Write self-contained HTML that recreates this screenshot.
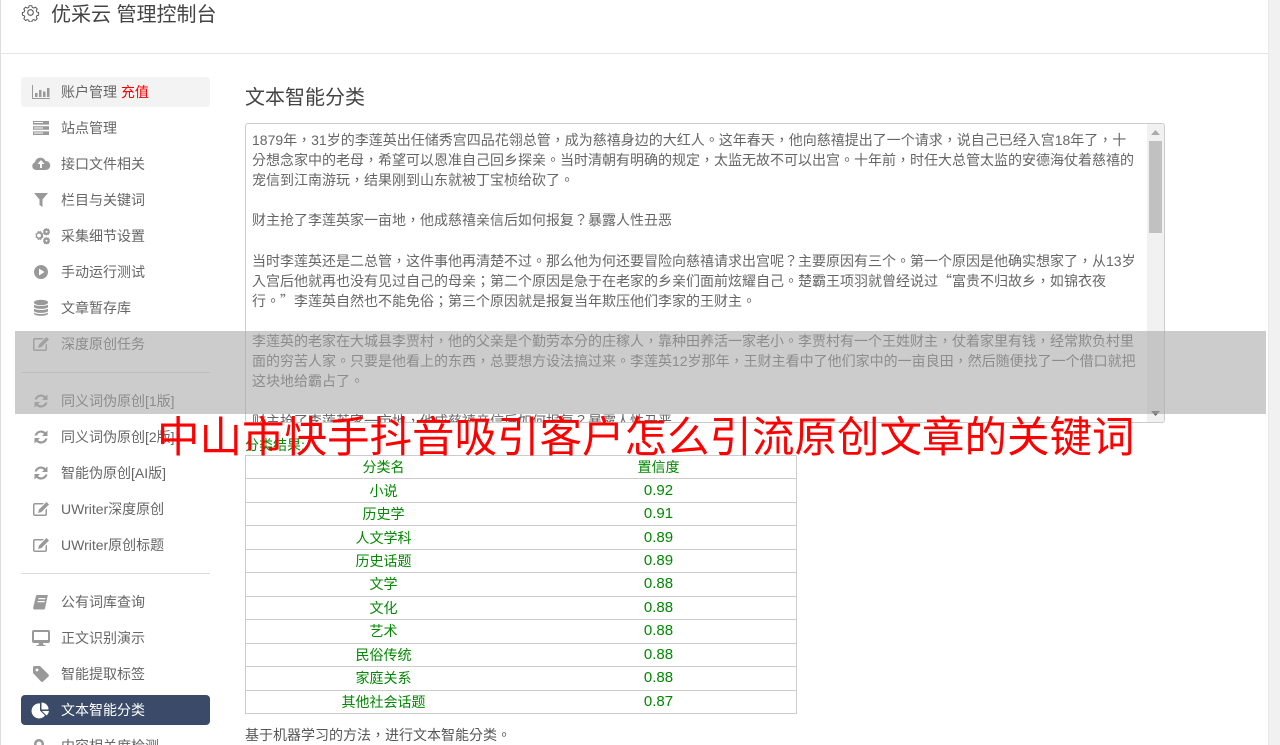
<!DOCTYPE html>
<html lang="zh-Hans"><head><meta charset="utf-8"><title>优采云 管理控制台</title>
<style>
*{box-sizing:border-box}
html,body{margin:0;padding:0;width:1280px;height:745px;overflow:hidden;background:#fff}
body{position:relative;font-family:"Liberation Sans","Noto Sans CJK SC",sans-serif;font-size:14px;color:#666}
.a{position:absolute;white-space:nowrap}
.it{position:absolute;left:21px;width:189px;height:30px;border-radius:4px;line-height:30px;padding-left:40px;color:#666;font-size:14px;white-space:nowrap}
.it svg{position:absolute;left:10px;top:6px;width:20px;height:18px;fill:#999}
.hr{position:absolute;left:21px;width:189px;height:1px;background:#ddd}
#ta{position:absolute;left:245px;top:123px;width:920px;height:300px;border:1px solid #ccc;border-radius:3px;overflow:hidden;background:#fff}
#ta .t{position:absolute;left:6px;top:6px;line-height:20.1px;font-size:14px;color:#666;white-space:nowrap;font-family:"Liberation Sans","Noto Sans CJK TC",sans-serif}
#ta .q{font-family:"Noto Sans CJK TC",sans-serif}
#sb{position:absolute;right:0;top:0;width:17px;height:298px;background:#f1f1f1}
#th{position:absolute;left:2px;top:17px;width:13px;height:92px;background:#c1c1c1}
table{position:absolute;left:245px;top:455px;width:552px;height:259px;border-collapse:collapse;color:#080;table-layout:fixed}
td{border-top:1px solid #ccc;border-bottom:1px solid #ccc;text-align:center;padding:0;font-size:14px;line-height:16px;height:23.4px}
tr td:first-child{border-left:1px solid #ccc}
tr td:last-child{border-right:1px solid #ccc;font-size:15px}
tr:first-child td:last-child{font-size:14px}
</style></head><body>
<div class="a" style="left:0;top:0;width:1px;height:745px;background:#ddd"></div>
<div class="a" style="left:1268px;top:0;width:12px;height:745px;background:#f1f1f1;border-left:1px solid #e9e9e9"></div>
<div class="a" style="left:0;top:53px;width:1268px;height:1px;background:#e5e5e5"></div>

<svg class="a" style="left:21px;top:3px" width="19" height="19" viewBox="0 0 19 19" fill="none" stroke="#555"><circle cx="9.500" cy="9.500" r="2.800" stroke-width="1.100"/><path stroke-width="1.100" d="M8 1.800h3l.5 2 1.700.700 1.800-1.100 2.100 2.100-1.100 1.800.700 1.700 2 .5v3l-2 .5-.700 1.700 1.100 1.800-2.100 2.100-1.800-1.100-1.700.700-.5 2H8l-.5-2-1.700-.700-1.800 1.100-2.100-2.100 1.100-1.800-.700-1.700-2-.5v-3l2-.5.700-1.700-1.100-1.800 2.100-2.100 1.800 1.100 1.700-.700z" transform="translate(1.100 1.100) scale(.885)" stroke-linejoin="round"/></svg>
<div class="a" style="left:51px;top:1px;font-size:20px;line-height:28px;color:#444">优采云 管理控制台</div>

<div class="it" style="top:77px;background:#f3f3f3"><svg viewBox="0 0 20 18"><path d="M1 2h1v13h17v1H1z"/><path d="M4 10h2.500v4H4zM8 7h2.500v7H8zM12 8.500h2.500V14H12zM16 5h2.500v9H16z"/></svg>账户管理 <span style="color:#f00">充值</span></div>
<div class="it" style="top:113px"><svg viewBox="0 0 20 18"><path d="M2 2h16v3.600H2zM2 7.200h16v3.600H2zM2 12.400h16V16H2z"/><path fill="#fff" d="M3 3h9v1H3zM3 8.500h9v1H3zM3 13.500h9v1H3z"/></svg>站点管理</div>
<div class="it" style="top:149px"><svg viewBox="0 0 20 18"><path d="M5 15a4 4 0 0 1-1-7.800A5.500 5.500 0 0 1 14.500 6 4.500 4.500 0 0 1 15 15z"/><path fill="#fff" d="M10 5l3.500 4H11v4H9V9H6.500z"/></svg>接口文件相关</div>
<div class="it" style="top:185px"><svg viewBox="0 0 20 18"><path d="M3 2h14l-5.500 6.500V16l-3-2V8.500z"/></svg>栏目与关键词</div>
<div class="it" style="top:221px"><svg viewBox="0 0 20 18"><path fill-rule="evenodd" d="M7 4l1.500.500 1.500-.500.800 1.800 1.700.900-.6 1.800.6 1.800-1.700.9L10 13l-1.500-.500L7 13l-.800-1.800-1.800-.9.600-1.800-.600-1.800 1.800-.9zM8 6.500a2 2 0 1 0 .01 0z"/><path fill-rule="evenodd" d="M15.500 1l1 .800 1.300-.200.300 1.300 1 .8-.6 1.100.6 1.100-1 .8-.3 1.300-1.300-.2-1 .8-1-.8-1.300.2-.3-1.300-1-.8.600-1.100-.600-1.100 1-.8.300-1.300 1.300.2zm0 2.800a1 1 0 1 0 .01 0zM15.500 10l1 .800 1.300-.200.300 1.300 1 .8-.6 1.100.6 1.100-1 .8-.3 1.300-1.300-.2-1 .8-1-.8-1.300.2-.3-1.300-1-.8.600-1.100-.600-1.100 1-.8.300-1.300 1.300.2zm0 2.800a1 1 0 1 0 .01 0z"/></svg>采集细节设置</div>
<div class="it" style="top:257px"><svg viewBox="0 0 20 18"><path fill-rule="evenodd" d="M10 2a7 7 0 1 1-.01 0zM8 5.500v7l5.500-3.500z"/></svg>手动运行测试</div>
<div class="it" style="top:293px"><svg viewBox="0 0 20 18"><ellipse cx="10" cy="3.500" rx="7" ry="2.800"/><path d="M3 5.500c1 2 13 2 14 0v2.500c-1 2.500-13 2.500-14 0zM3 9.500c1 2 13 2 14 0V12c-1 2.500-13 2.500-14 0zM3 13.500c1 2 13 2 14 0v1.200c-1 2.800-13 2.800-14 0z"/></svg>文章暂存库</div>
<div class="it" style="top:329px"><svg viewBox="0 0 20 18"><path d="M4 3h9l-1.500 1.500H4A.5.500 0 0 0 3.500 5v9c0 .3.200.5.500.5h10a.5.500 0 0 0 .5-.5V10L16 8.500V14a2 2 0 0 1-2 2H4a2 2 0 0 1-2-2V5a2 2 0 0 1 2-2z"/><path d="M15.500 2L18 4.500 10.500 12 7 13l1-3.500z"/></svg>深度原创任务</div>
<div class="hr" style="top:372px"></div>
<div class="it" style="top:386px"><svg viewBox="0 0 20 18"><path d="M10 2.500a6.500 6.500 0 0 1 4.500 1.800L16.500 2.500V8H11l2-2a4.300 4.300 0 0 0-7.200 1.500H3.500A6.600 6.600 0 0 1 10 2.500zM3.500 10H9l-2 2a4.300 4.300 0 0 0 7.200-1.500h2.300a6.600 6.600 0 0 1-11 3.200L3.500 15.500z"/></svg>同义词伪原创[1版]</div>
<div class="it" style="top:422px"><svg viewBox="0 0 20 18"><path d="M10 2.500a6.500 6.500 0 0 1 4.500 1.800L16.500 2.500V8H11l2-2a4.300 4.300 0 0 0-7.200 1.500H3.500A6.600 6.600 0 0 1 10 2.500zM3.500 10H9l-2 2a4.300 4.300 0 0 0 7.200-1.500h2.300a6.600 6.600 0 0 1-11 3.200L3.500 15.500z"/></svg>同义词伪原创[2版]</div>
<div class="it" style="top:458px"><svg viewBox="0 0 20 18"><path d="M10 2.500a6.500 6.500 0 0 1 4.500 1.800L16.500 2.500V8H11l2-2a4.300 4.300 0 0 0-7.200 1.500H3.500A6.600 6.600 0 0 1 10 2.500zM3.500 10H9l-2 2a4.300 4.300 0 0 0 7.200-1.500h2.300a6.600 6.600 0 0 1-11 3.200L3.500 15.500z"/></svg>智能伪原创[AI版]</div>
<div class="it" style="top:494px"><svg viewBox="0 0 20 18"><path d="M4 3h9l-1.500 1.500H4A.5.500 0 0 0 3.500 5v9c0 .3.200.5.500.5h10a.5.500 0 0 0 .5-.5V10L16 8.500V14a2 2 0 0 1-2 2H4a2 2 0 0 1-2-2V5a2 2 0 0 1 2-2z"/><path d="M15.500 2L18 4.500 10.500 12 7 13l1-3.500z"/></svg>UWriter深度原创</div>
<div class="it" style="top:530px"><svg viewBox="0 0 20 18"><path d="M4 3h9l-1.500 1.500H4A.5.500 0 0 0 3.500 5v9c0 .3.200.5.500.5h10a.5.500 0 0 0 .5-.5V10L16 8.500V14a2 2 0 0 1-2 2H4a2 2 0 0 1-2-2V5a2 2 0 0 1 2-2z"/><path d="M15.500 2L18 4.500 10.500 12 7 13l1-3.500z"/></svg>UWriter原创标题</div>
<div class="hr" style="top:573px"></div>
<div class="it" style="top:587px"><svg viewBox="0 0 20 18"><path d="M6 2h11l-.5 1.500L14 15.500c-.3.800-1 1-1.500 1H4c-1.500 0-2-1-1.800-2L5 3c.1-.6.500-1 1-1zM7.500 5l-.3 1.200h7l.3-1.200zM6.800 8l-.3 1.200h7l.3-1.200z"/></svg>公有词库查询</div>
<div class="it" style="top:623px"><svg viewBox="0 0 20 18"><path fill-rule="evenodd" d="M3 1h14a2 2 0 0 1 2 2v9a2 2 0 0 1-2 2h-5l.5 2h2v1h-9v-1h2l.5-2H3a2 2 0 0 1-2-2V3a2 2 0 0 1 2-2zm0 2v8h14V3z"/></svg>正文识别演示</div>
<div class="it" style="top:659px"><svg viewBox="0 0 20 18"><path fill-rule="evenodd" d="M3 1h6l8.500 8.500a1.500 1.500 0 0 1 0 2L12 16.500a1.500 1.500 0 0 1-2 0L2 8V2zm3 2.500a1.500 1.500 0 1 0 .01 0z"/></svg>智能提取标签</div>
<div class="it" style="top:695px;background:#3a4a68;color:#fff"><svg viewBox="0 0 20 18" style="fill:#fff"><path d="M9 2.500v7l5 5A7.500 7.500 0 1 1 9 2.500z"/><path d="M10.500 1.500a7 7 0 0 1 7 7h-7z"/><path d="M11 10h7a7.500 7.500 0 0 1-2.500 4.500z"/></svg>文本智能分类</div>
<div class="it" style="top:731px"><svg viewBox="0 0 20 18"><path fill-rule="evenodd" d="M8 2a5 5 0 1 1-.01 0zm0 2.500a2.500 2.500 0 1 0 .01 0z"/></svg>内容相关度检测</div>

<div class="a" style="left:245px;top:84px;font-size:20px;line-height:28px;color:#444">文本智能分类</div>

<div id="ta">
<div class="t" lang="zh-Hant">1879年，31岁的李莲英出任储秀宫四品花翎总管，成为慈禧身边的大红人。这年春天，他向慈禧提出了一个请求，说自己已经入宫18年了，十<br>分想念家中的老母，希望可以恩准自己回乡探亲。当时清朝有明确的规定，太监无故不可以出宫。十年前，时任大总管太监的安德海仗着慈禧的<br>宠信到江南游玩，结果刚到山东就被丁宝桢给砍了。<br><br>财主抢了李莲英家一亩地，他成慈禧亲信后如何报复？暴露人性丑恶<br><br>当时李莲英还是二总管，这件事他再清楚不过。那么他为何还要冒险向慈禧请求出宫呢？主要原因有三个。第一个原因是他确实想家了，从13岁<br>入宫后他就再也没有见过自己的母亲；第二个原因是急于在老家的乡亲们面前炫耀自己。楚霸王项羽就曾经说过<span class="q">“</span>富贵不归故乡，如锦衣夜<br>行。<span class="q">”</span>李莲英自然也不能免俗；第三个原因就是报复当年欺压他们李家的王财主。<br><br>李莲英的老家在大城县李贾村，他的父亲是个勤劳本分的庄稼人，靠种田养活一家老小。李贾村有一个王姓财主，仗着家里有钱，经常欺负村里<br>面的穷苦人家。只要是他看上的东西，总要想方设法搞过来。李莲英12岁那年，王财主看中了他们家中的一亩良田，然后随便找了一个借口就把<br>这块地给霸占了。<br><br>财主抢了李莲英家一亩地，他成慈禧亲信后如何报复？暴露人性丑恶</div>
<div id="sb"><div id="th"></div>
<svg style="position:absolute;left:4px;top:6px" width="9" height="5"><path d="M4.500 0L9 5H0z" fill="#aaa"/></svg>
<svg style="position:absolute;left:4px;top:287px" width="9" height="5"><path d="M0 0h9L4.500 5z" fill="#666"/></svg></div>
</div>

<div class="a" style="left:245px;top:436px;color:#080;line-height:18px">分类结果:</div>
<table>
<tr><td>分类名</td><td>置信度</td></tr>
<tr><td>小说</td><td>0.92</td></tr>
<tr><td>历史学</td><td>0.91</td></tr>
<tr><td>人文学科</td><td>0.89</td></tr>
<tr><td>历史话题</td><td>0.89</td></tr>
<tr><td>文学</td><td>0.88</td></tr>
<tr><td>文化</td><td>0.88</td></tr>
<tr><td>艺术</td><td>0.88</td></tr>
<tr><td>民俗传统</td><td>0.88</td></tr>
<tr><td>家庭关系</td><td>0.88</td></tr>
<tr><td>其他社会话题</td><td>0.87</td></tr>
</table>
<div class="a" lang="zh-Hant" style="left:245px;top:725px;line-height:20px;color:#555;font-family:'Liberation Sans','Noto Sans CJK TC',sans-serif">基于机器学习的方法，进行文本智能分类。</div>

<div class="a" style="left:15px;top:331px;width:1251px;height:83px;background:rgba(167,167,167,.58)"></div>
<div class="a" style="left:157px;top:411px;font-size:42.500px;line-height:56px;color:#f00">中山市快手抖音吸引客户怎么引流原创文章的关键词</div>
</body></html>
